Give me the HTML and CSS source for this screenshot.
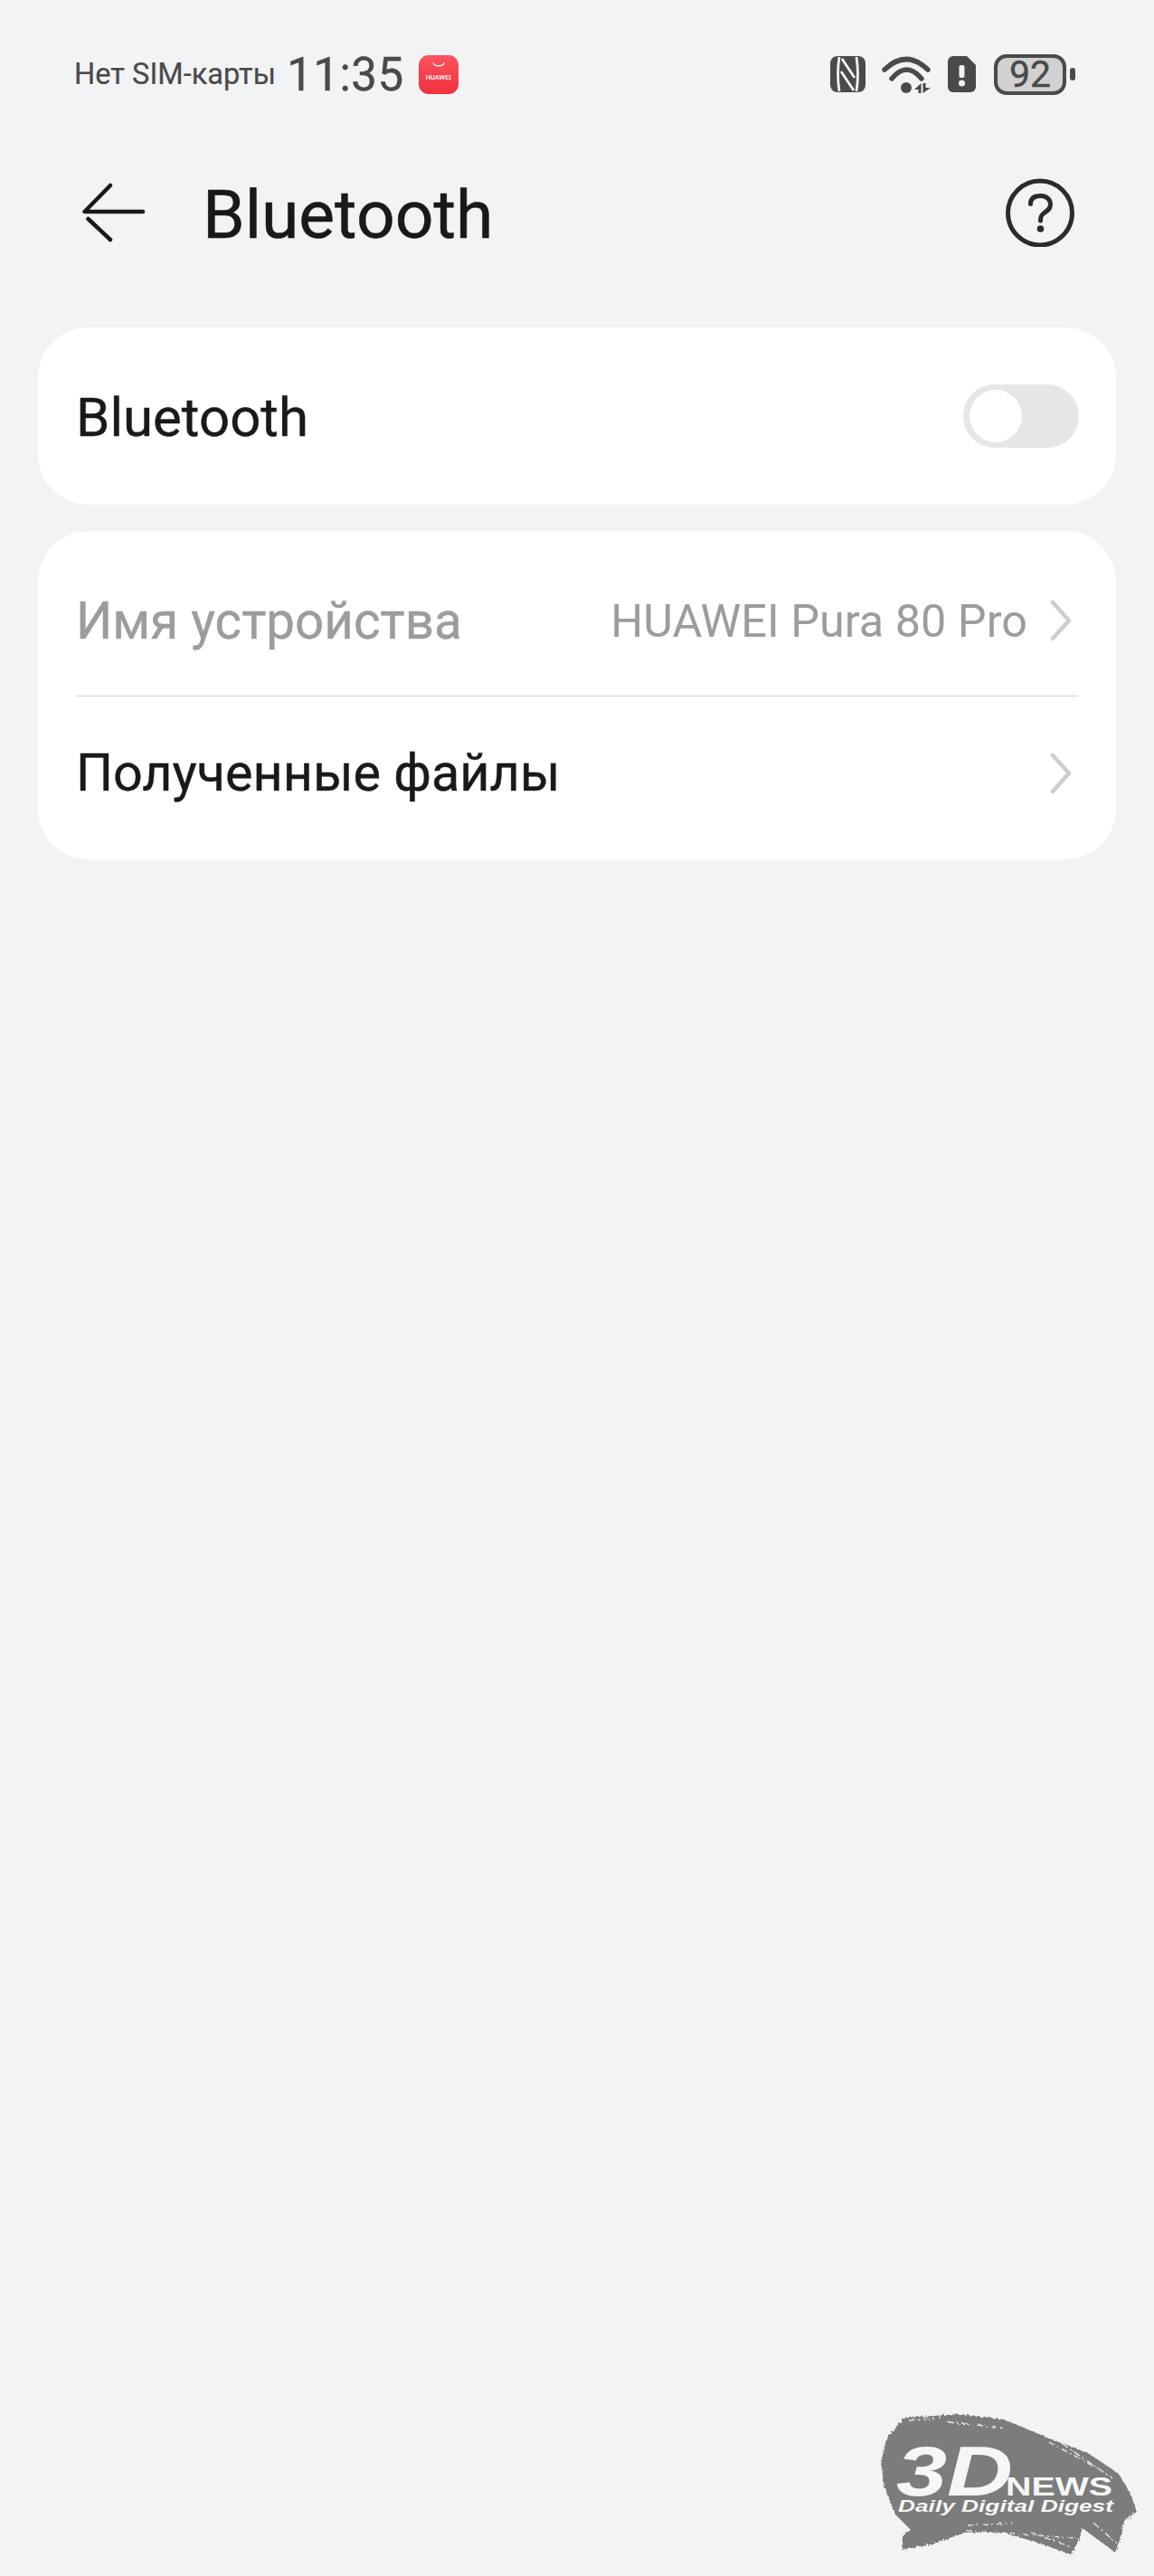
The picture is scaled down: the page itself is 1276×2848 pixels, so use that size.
FILE: index.html
```html
<!DOCTYPE html>
<html lang="ru">
<head>
    <meta charset="UTF-8">
    <meta name="viewport" content="width=device-width, initial-scale=1.0">
    <title>Bluetooth</title>
    <link rel="stylesheet" href="styles.css">
</head>
<body>
    <div class="status-bar">
        <div class="status-left">
            <span class="sim-label">Нет SIM-карты</span>
            <span class="clock">11:35</span>
            <div class="app-badge">
                <svg class="app-smile" viewBox="0 0 16 8"><path d="M2 1.5C3.5 6 12.5 6 14 1.5"/></svg>
                <span class="app-name">HUAWEI</span>
            </div>
        </div>
        <div class="status-right">
            <svg class="icon-nfc" viewBox="0 0 39 40">
                <rect width="39" height="40" rx="8" fill="#4a4a4a"/>
                <path d="M10 1C8 14 8 26 10 39M29 1C31 14 31 26 29 39M13 3L27 24M12 17L26 38" fill="none" stroke="#f1f3f5" stroke-width="2.800"/>
            </svg>
            <svg class="icon-wifi" viewBox="0 0 54 41">
                <path d="M3 15Q27-8 51 15M11 25Q27.500 5 44 25" fill="none" stroke="#4a4a4a" stroke-width="5.500" stroke-linecap="round"/>
                <circle cx="27" cy="35" r="6" fill="#4a4a4a"/>
                <path d="M43.500 30V41H40.500V37H36ZM45.500 30H48.500V35H54L45.500 41Z" fill="#4a4a4a"/>
            </svg>
            <svg class="icon-sim" viewBox="0 0 31 40">
                <path d="M6 0H21L31 10V34A6 6 0 0 1 25 40H6A6 6 0 0 1 0 34V6A6 6 0 0 1 6 0Z" fill="#4a4a4a"/>
                <rect x="12.500" y="10" width="6" height="14" rx="2" fill="#f1f3f5"/>
                <circle cx="15.500" cy="30" r="3.500" fill="#f1f3f5"/>
            </svg>
            <div class="battery">
                <div class="battery-body">92</div>
                <div class="battery-cap"></div>
            </div>
        </div>
    </div>

    <div class="header">
        <svg class="icon-back" viewBox="0 0 72 66">
            <path d="M32 3L3.500 32H68M7.500 40L32 63"/>
        </svg>
        <h1 class="title">Bluetooth</h1>
        <svg class="icon-help" viewBox="0 0 76 76">
            <circle cx="38" cy="38.500" r="35.500" fill="none" stroke="#2b2b2b" stroke-width="5"/>
            <path d="M27.500 28.500C27.500 22 32 19.500 38.500 19.500C45 19.500 49.500 23.500 49.500 29C49.500 34 46 36 42.500 38.500C39.500 40.500 38.500 42 38.500 47" fill="none" stroke="#2b2b2b" stroke-width="5" stroke-linecap="round"/>
            <circle cx="38.500" cy="56" r="3.800" fill="#2b2b2b"/>
        </svg>
    </div>

    <div class="card card-toggle">
        <div class="row">
            <span class="row-label row-label-latin">Bluetooth</span>
            <div class="switch"><div class="switch-thumb"></div></div>
        </div>
    </div>

    <div class="card card-list">
        <div class="row row-device">
            <span class="row-label muted">Имя устройства</span>
            <div class="row-end">
                <span class="row-value">HUAWEI Pura 80 Pro</span>
                <svg class="chevron" viewBox="0 0 24 46"><path d="M3 3L21 23L3 43"/></svg>
            </div>
        </div>
        <div class="row row-files">
            <span class="row-label">Полученные файлы</span>
            <div class="row-end">
                <svg class="chevron" viewBox="0 0 24 46"><path d="M3 3L21 23L3 43"/></svg>
            </div>
        </div>
    </div>

    <!-- watermark sits over the page -->
    <svg class="watermark" viewBox="0 0 326 208">
        <defs>
            <filter id="rough" x="-5%" y="-5%" width="110%" height="110%">
                <feTurbulence type="fractalNoise" baseFrequency="0.35" numOctaves="2" seed="4"/>
                <feDisplacementMap in="SourceGraphic" scale="5"/>
            </filter>
        </defs>
        <g filter="url(#rough)">
            <path d="M50 33L110 29L160 35L213 57L253 72L287 95L300 117L307 137L293 147L290 163L283 182L267 170L247 155L243 167L235 185L200 172L160 160L117 160L80 173L47 179L48 163L57 157L40 140L28 110L24 82L30 57L43 40Z" fill="#7b7b7b"/>
            <path d="M55 36L90 33M98 38L160 44M210 60L262 88M225 62L280 100M120 152L170 150M118 158L240 166M190 160L235 176M260 150L285 172" fill="none" stroke="#f1f3f5" stroke-width="1.300" stroke-dasharray="7 3 2 4"/>
        </g>
        <text class="wm-3d" x="41" y="119" textLength="129" lengthAdjust="spacingAndGlyphs">3D</text>
        <text class="wm-news" x="162" y="119" textLength="118" lengthAdjust="spacingAndGlyphs">NEWS</text>
        <text class="wm-tag" x="43" y="137" textLength="238" lengthAdjust="spacingAndGlyphs">Daily Digital Digest</text>
    </svg>
</body>
</html>
```

FILE: styles.css
```css
body {
    font-family: Roboto, 'Noto Sans', sans-serif;
    margin: 0;
    width: 1276px;
    height: 2848px;
    position: relative;
    overflow: hidden;
    background-color: #f1f3f5;
    color: #191919;
}

/* status bar */
.status-bar {
    display: flex;
    justify-content: space-between;
    align-items: center;
    height: 48px;
    padding: 58px 87px 0 82px;
    color: #4a4a4a;
}
.status-left,
.status-right {
    display: flex;
    align-items: center;
}
.sim-label {
    font-size: 32.6px;
    -webkit-text-stroke: 0.2px #4a4a4a;
}
.clock {
    font-size: 51px;
    margin-left: 12px;
    letter-spacing: 0.5px;
    -webkit-text-stroke: 0.4px #4a4a4a;
}
.app-badge {
    width: 44px;
    height: 43px;
    margin-left: 16px;
    border-radius: 11px;
    background: linear-gradient(#fb5560, #f0303c);
    display: flex;
    flex-direction: column;
    align-items: center;
}
.app-smile {
    width: 16px;
    height: 8px;
    margin-top: 7px;
}
.app-smile path {
    fill: none;
    stroke: #fff;
    stroke-width: 1.2;
}
.app-name {
    font-size: 7.5px;
    font-weight: 500;
    color: #fff;
    margin-top: 5px;
}
.icon-nfc {
    width: 39px;
    height: 40px;
}
.icon-wifi {
    width: 54px;
    height: 41px;
    margin-left: 18px;
}
.icon-sim {
    width: 31px;
    height: 40px;
    margin-left: 19px;
}
.battery {
    display: flex;
    align-items: center;
    margin-left: 20px;
}
.battery-body {
    width: 72px;
    height: 37px;
    border: 4px solid #4a4a4a;
    border-radius: 14px;
    background-color: #d1d1d1;
    font-size: 41px;
    line-height: 37px;
    text-align: center;
    -webkit-text-stroke: 0.4px #4a4a4a;
}
.battery-cap {
    width: 6px;
    height: 14px;
    margin-left: 4px;
    border-radius: 3px;
    background-color: #4a4a4a;
}

/* header */
.header {
    display: flex;
    align-items: center;
    height: 256px;
    padding: 0 88px 0 90px;
}
.icon-back {
    width: 72px;
    height: 66px;
    margin-top: 2px;
}
.icon-back path {
    fill: none;
    stroke: #191919;
    stroke-width: 4.5;
    stroke-linecap: round;
    stroke-linejoin: round;
}
.title {
    flex: 1;
    margin: 5px 0 0 62px;
    font-size: 75px;
    font-weight: 400;
    -webkit-text-stroke: 0.5px #191919;
}
.icon-help {
    width: 76px;
    height: 76px;
    margin-top: 2px;
}

/* cards */
.card {
    margin: 0 42px;
    padding: 0 42px;
    background-color: white;
    border-radius: 56px;
}
.card-toggle {
    height: 196px;
    padding-right: 41px;
}
.card-list {
    margin-top: 29px;
    padding-top: 16px;
    padding-bottom: 11px;
}
.row {
    display: flex;
    justify-content: space-between;
    align-items: center;
}
.card-toggle .row {
    height: 100%;
}
.row-device {
    height: 166px;
}
.row-files {
    height: 169px;
    border-top: 1px solid #d0d0d0;
}
.row-label {
    font-size: 57.5px;
    -webkit-text-stroke: 0.4px;
}
.row-label-latin {
    font-size: 60px;
    margin-top: 3px;
}
.row-label.muted {
    font-size: 56.5px;
    margin-top: 2px;
    color: #9c9c9c;
}
.row-end {
    display: flex;
    align-items: center;
}
.row-value {
    font-size: 50.4px;
    color: #9c9c9c;
    margin-right: 25px;
}
.chevron {
    width: 24px;
    height: 46px;
    margin-right: 7px;
}
.chevron path {
    fill: none;
    stroke: #cdcdcd;
    stroke-width: 4.5;
    stroke-linecap: round;
    stroke-linejoin: round;
}

/* toggle */
.switch {
    width: 128px;
    height: 70px;
    border-radius: 35px;
    background-color: #e6e6e6;
    display: flex;
    align-items: center;
    padding-left: 7px;
    box-sizing: border-box;
}
.switch-thumb {
    width: 58px;
    height: 58px;
    border-radius: 50%;
    background-color: white;
}

/* watermark */
.watermark {
    position: absolute;
    left: 950px;
    top: 2640px;
    width: 326px;
    height: 208px;
}
.watermark text {
    font-family: 'Liberation Sans', sans-serif;
    font-weight: bold;
    fill: #f6f6f6;
}
.wm-3d {
    font-size: 78px;
    font-style: italic;
}
.wm-news {
    font-size: 29px;
}
.wm-tag {
    font-size: 18px;
    font-style: italic;
}
```
